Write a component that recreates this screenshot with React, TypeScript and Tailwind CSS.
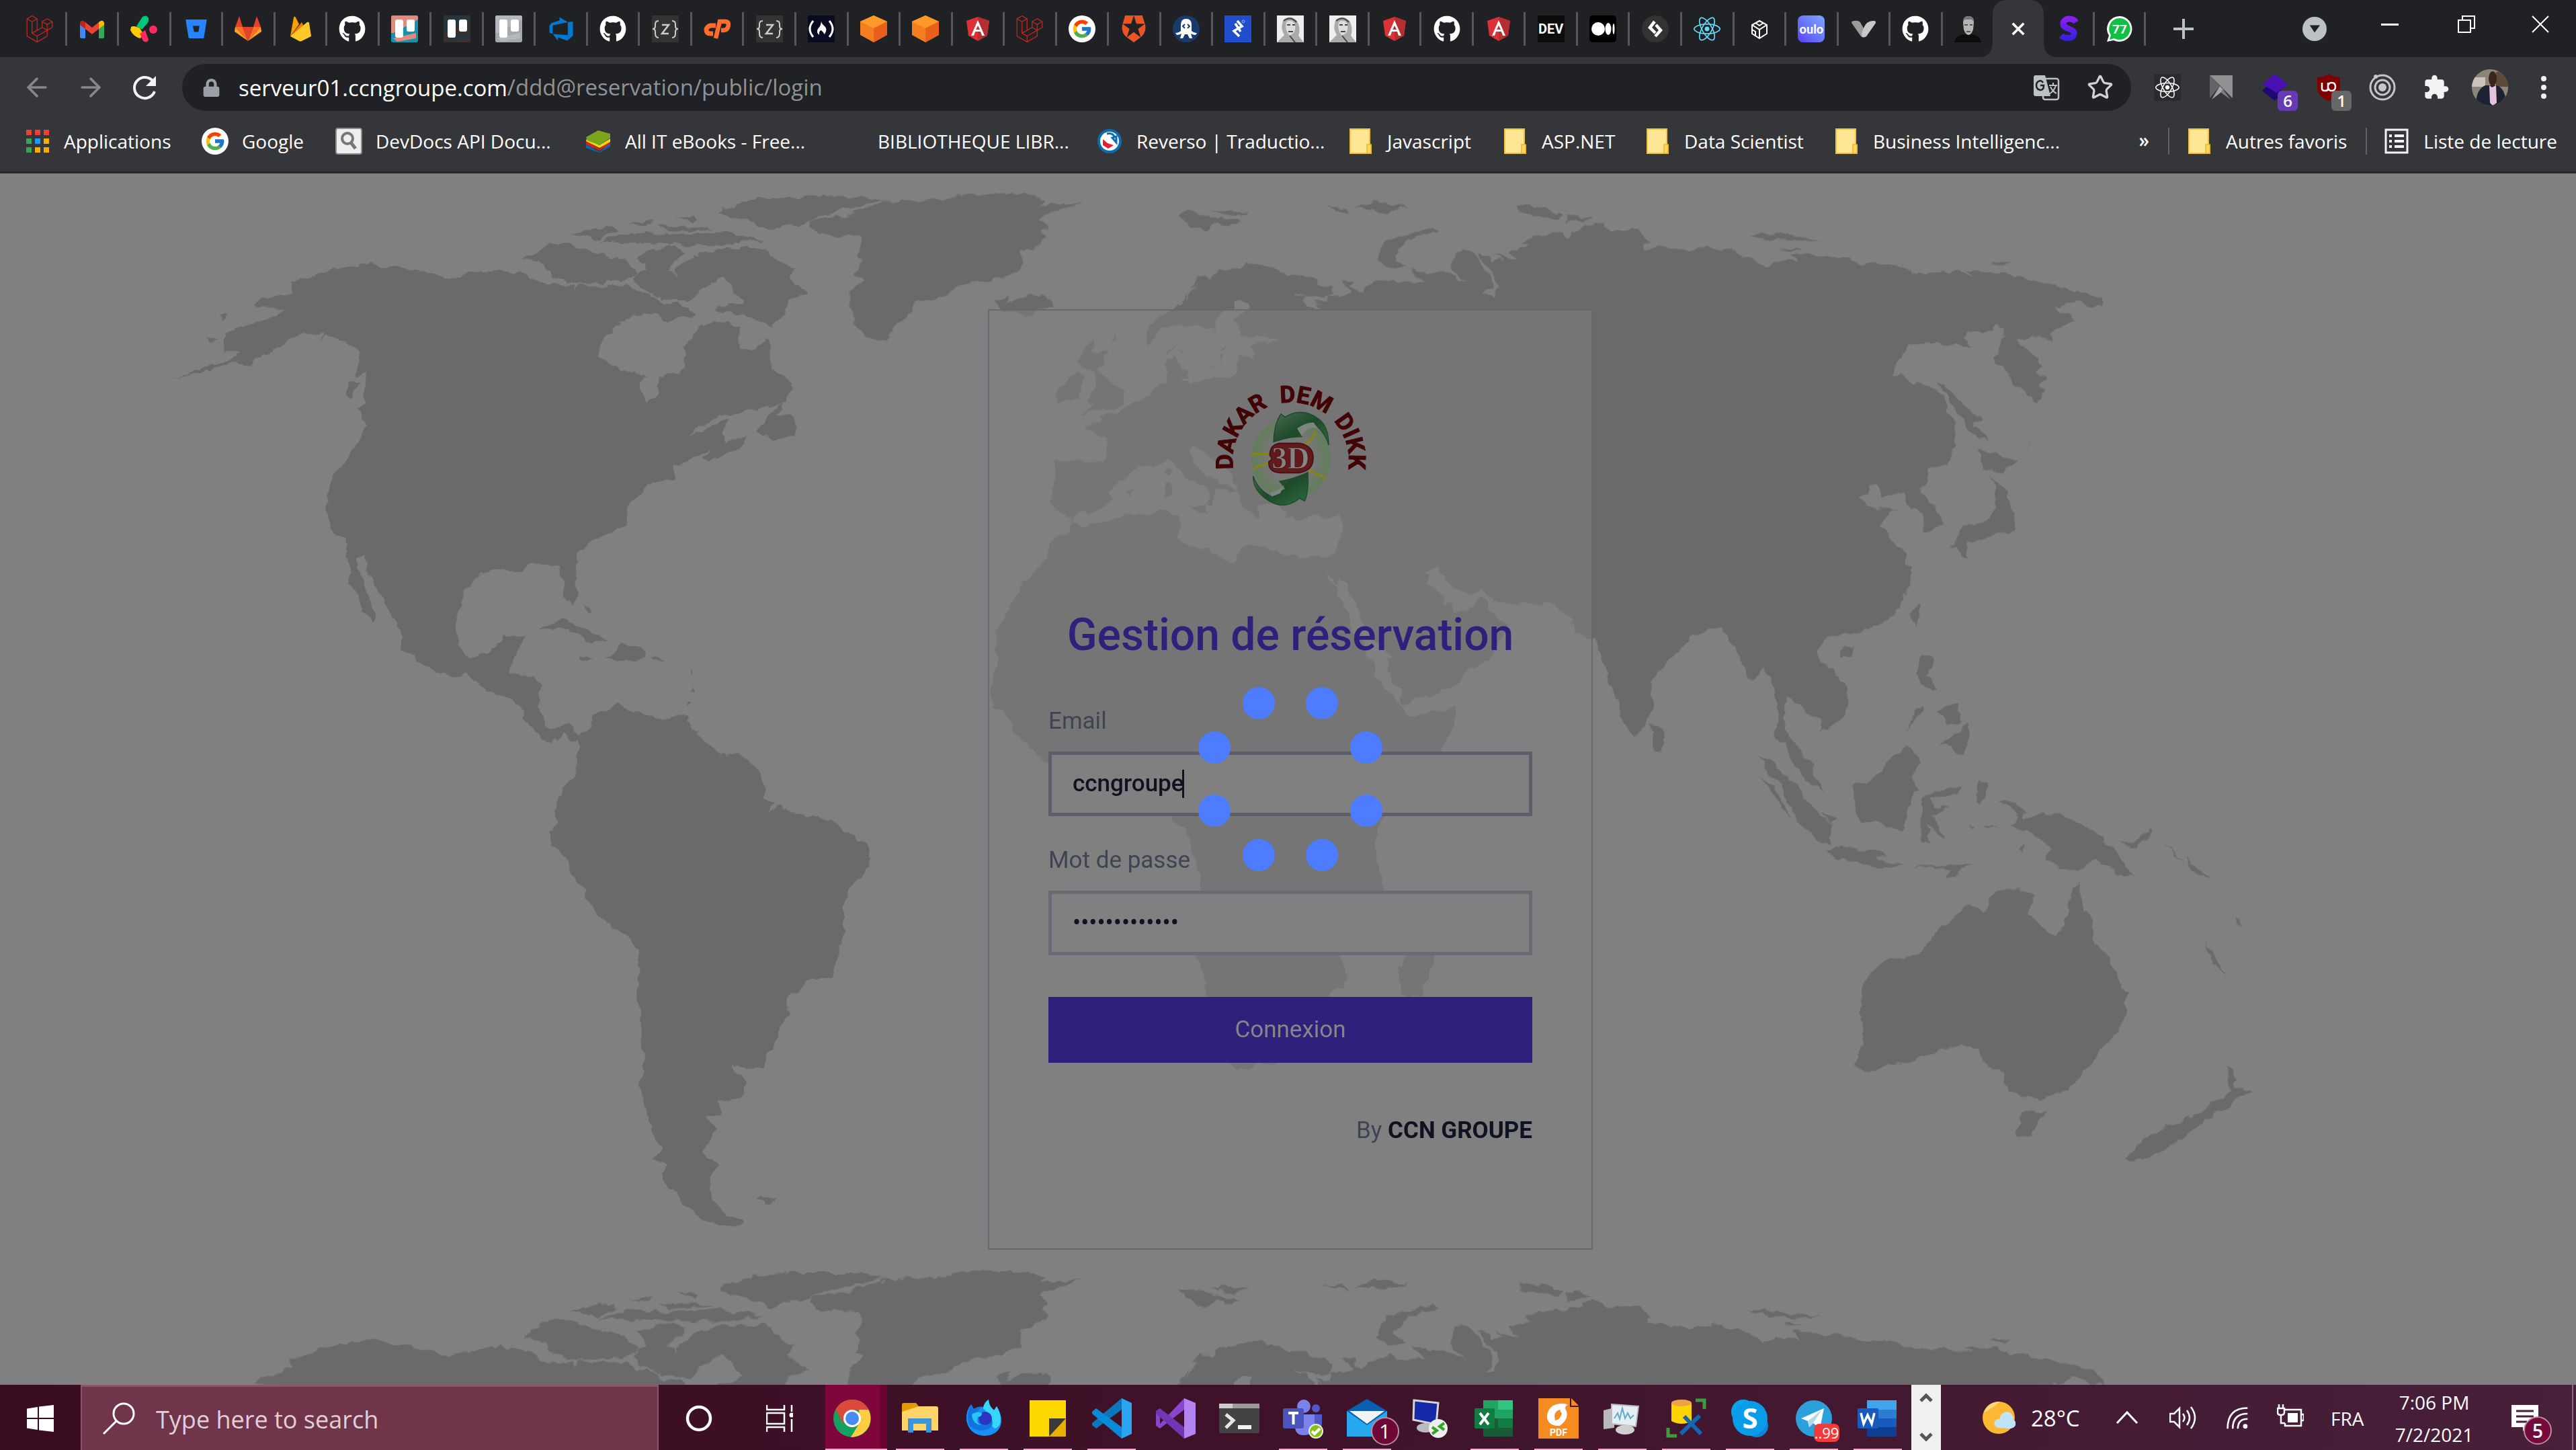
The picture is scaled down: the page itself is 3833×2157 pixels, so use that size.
import React from "react";
import { FaLaravel, FaGithub, FaReact, FaBitbucket, FaLock } from "react-icons/fa";
import { FcGoogle } from "react-icons/fc";
import { SiAuth0 } from "react-icons/si";
import { VscAzureDevops } from "react-icons/vsc";
import { ArrowLeft, ArrowRight, Star } from "lucide-react";

type SvgProps = { children: React.ReactNode; box?: string; className?: string };

function Svg({ children, box = "0 0 40 40", className = "size-10" }: SvgProps) {
  return (
    <svg viewBox={box} className={className} aria-hidden="true" fill="none">
      {children}
    </svg>
  );
}

/* ---------- tab favicons ---------- */

const Laravel = () => <FaLaravel className="size-10 text-[#c3271f]" />;
const Github = () => <FaGithub className="size-10 text-white" />;
const Angular = () => (
  <Svg>
    <path d="M20 2 37 8l-3 22-14 8L6 30 3 8z" fill="#dd3136" />
    <path d="M20 2 37 8l-3 22-14 8z" fill="#b52e31" />
    <path d="m20 7 10 23h-4l-2-6h-8l-2 6h-4zm0 8-3 6h6z" fill="#fff" />
  </Svg>
);
const Gmail = () => (
  <Svg>
    <path d="M2 12v20q0 2 2 2h6V18z" fill="#4285f4" />
    <path d="M38 12v20q0 2-2 2h-6V18z" fill="#34a853" />
    <path d="M30 10v10l8-6v-3q-2-6-8-1z" fill="#fbbc04" />
    <path d="M2 11q2-6 8-1v10l-8-6z" fill="#c5221f" />
    <path d="m10 10 10 8 10-8v10l-10 8-10-8z" fill="#ea4335" />
  </Svg>
);
const ClickShape = () => (
  <Svg>
    <path d="m9 16 9-14q6-4 9 2 1 4-2 8l-8 9z" fill="#00c875" />
    <path d="M1 17q4-3 13 2l5 8-4 7q-10-2-15-12z" fill="#ffcc00" />
    <path d="m14 27 5 11q6 4 8-2l-5-14z" fill="#ff2b62" />
    <circle cx="34" cy="21" r="6" fill="#ff2b62" />
  </Svg>
);
const Gitlab = () => (
  <Svg>
    <path d="m20 38 8-21H12z" fill="#e24329" />
    <path d="m20 38-8-21H1z" fill="#fc6d26" />
    <path d="m20 38 8-21h11z" fill="#fc6d26" />
    <path d="M1 17 0 24l20 14zM39 17l1 7-20 14z" fill="#fca326" />
    <path d="M1 17h11L7 1zM39 17H28l5-16z" fill="#e24329" />
  </Svg>
);
const Firebase = () => (
  <Svg>
    <path d="M5 31 10 3q1-3 3 0l5 10z" fill="#ffa000" />
    <path d="m5 31 17-21 5 10z" fill="#f57c00" />
    <path d="m5 31 25-21q2-1 3 1l3 20-14 7q-2 1-4 0z" fill="#ffca28" />
  </Svg>
);
function TrelloTile({ bg, strip }: { bg: string; strip: string }) {
  return (
    <Svg>
      <rect width="40" height="40" rx="3" fill={bg} />
      <path d="M0 3q0-3 3-3h34q3 0 3 3v3L4 26H0zM3 34l34-8v8l-28 5z" fill={strip} />
      <rect x="6" y="6" width="12" height="27" rx="3" fill="#fff" />
      <rect x="23" y="6" width="12" height="18" rx="3" fill="#fff" />
    </Svg>
  );
}
const Braces = () => (
  <Svg>
    <rect width="40" height="40" fill="#333" />
    <path d="M10 8q-5 0-5 5v3q0 4-4 4 4 0 4 4v3q0 6 5 6M30 8q5 0 5 5v3q0 4 4 4-4 0-4 4v3q0 6-5 6" stroke="#ccc" strokeWidth="2" />
    <path d="M15 14h10L15 27h10" stroke="#ccc" strokeWidth="2.5" />
  </Svg>
);
const CPanel = () => (
  <Svg>
    <path d="M18 15h-7q-6 1-7 6 0 6 6 6h4" stroke="#ff6c2c" strokeWidth="7" />
    <path d="M18 34 24 9h8q5 0 5 5-1 8-7 8h-4" stroke="#ff6c2c" strokeWidth="6.5" />
  </Svg>
);
const Camp = () => (
  <Svg>
    <rect width="40" height="40" fill="#0a0a23" />
    <path d="M8 8q-10 12 0 24M32 8q10 12 0 24" stroke="#fff" strokeWidth="3" />
    <path d="M20 8q0 7-5 12-3 5 2 9-1-6 3-7 3 3 5 6 5-8 0-12-5-4-5-8z" fill="#fff" />
  </Svg>
);
const Cube = () => (
  <Svg>
    <path d="m20 0 20 9v20L20 40 0 29V9z" fill="#f47e20" />
    <path d="m20 0 20 9-20 10L0 9z" fill="#ff9a2a" />
    <path d="M40 9v20L20 40V19z" fill="#e8601c" />
  </Svg>
);
const GoogleDot = () => (
  <span className="flex size-10 items-center justify-center rounded-full bg-white">
    <FcGoogle className="size-8" />
  </span>
);
const Octopus = () => (
  <Svg>
    <circle cx="20" cy="20" r="20" fill="#173b6b" />
    <path d="M12 14q0-9 8-9t8 9v9q3 3 8 3l-2 3q-4 0-7-2l2 7h-4l-3-6-4 0-3 6h-4l2-7q-3 2-7 2l-2-3q5 0 8-3z" fill="#fff" />
    <path d="m18 13-3 3 3 3m4-6 3 3-3 3" stroke="#173b6b" strokeWidth="2" />
  </Svg>
);
const Toptal = () => (
  <Svg>
    <rect width="40" height="40" fill="#204ecf" />
    <path d="m19 8 7 8-12 7 8 8M16 12l8 12" stroke="#fff" strokeWidth="3.5" />
    <circle cx="28" cy="9" r="2" stroke="#9fb6ff" />
  </Svg>
);
const Sketch = () => (
  <Svg>
    <rect width="40" height="40" fill="#eee" />
    <path d="M10 6q10-8 20 2 6 12 2 22l8 10H0l11-11Q4 18 10 6z" fill="#aaa" />
    <path d="M14 10q6-5 12 1 3 9-1 15l-6 4q-8-8-5-20z" fill="#ddd" />
    <path d="M15 14h5m3 0h4M17 24h7M10 8q10-8 19 2M19 30l8 10" stroke="#444" strokeWidth="2" />
  </Svg>
);
const Dev = () => (
  <span className="flex size-10 items-center justify-center bg-[#0c0c0c] font-['Roboto',sans-serif] text-[20px] leading-none font-bold text-white">
    DEV
  </span>
);
const Medium = () => (
  <Svg>
    <rect width="40" height="40" rx="5" fill="#000" />
    <circle cx="13" cy="20" r="10" fill="#fff" />
    <ellipse cx="28" cy="20" rx="4.5" ry="9" fill="#fff" />
    <ellipse cx="36" cy="20" rx="1.500" ry="8" fill="#fff" />
  </Svg>
);
const Bolt = () => (
  <Svg>
    <circle cx="20" cy="20" r="20" fill="#333" />
    <path d="m19 9-7 9 8 8M21 14l7 8-8 9" stroke="#fff" strokeWidth="4.5" />
  </Svg>
);
const ReactTab = () => <FaReact className="size-10 text-[#61dafb]" />;
const Sandbox = () => (
  <Svg>
    <path d="m20 8 11 6v13l-11 7-11-7V14zM9 14l11 7 11-7M20 21v13M14 11l6 4 6-4M9 21l5 3v6" stroke="#fff" strokeWidth="2" />
  </Svg>
);
const Oulo = () => (
  <span className="flex size-10 items-center justify-center rounded-lg bg-linear-to-tr from-[#5b3df5] to-[#7fa6ff] font-['Lato',sans-serif] text-[18px] leading-none font-black text-white">
    oulo
  </span>
);
const Vee = () => (
  <Svg>
    <path d="M2 11q0-3 4-3 8-1 10 4l4 7q4-11 15-11 3 0 3 3L24 31q-4 3-8 0z" fill="#9b9b9b" />
    <path d="M20 19q4-11 15-11 3 0 3 3L24 31q-3 2-6 1-2-6 2-13z" fill="#c8c8c8" />
  </Svg>
);
const Portrait = () => (
  <Svg>
    <path d="M0 40q2-10 12-12h16q10 2 12 12z" fill="#0c0c0c" />
    <path d="M13 10q0-9 8-9t8 9l-1 11q-3 8-7 8t-7-8z" fill="#b5b5b5" />
    <path d="M13 9Q13 1 21 1t8 8l-3-3H16z" fill="#777" />
    <path d="M15 14h5m3 0h4M18 24h6" stroke="#555" strokeWidth="2" />
  </Svg>
);
const PurpleS = () => (
  <Svg>
    <defs>
      <linearGradient id="ps" x2="0" y2="1">
        <stop stopColor="#8a1ff0" />
        <stop offset="1" stopColor="#3b1fe0" />
      </linearGradient>
    </defs>
    <path d="M31 10C27 3 13 3 12 12c-1 9 18 7 16 16-2 8-15 6-19 2" stroke="url(#ps)" strokeWidth="9" />
  </Svg>
);
const Whats = () => (
  <Svg>
    <path d="M20 1a19 19 0 1 1-9 36L1 39l3-9A19 19 0 0 1 20 1z" fill="#fff" />
    <path d="M20 4a16 16 0 1 1-8 30l-7 2 2-7A16 16 0 0 1 20 4z" fill="#0fc143" />
    <text x="20" y="27" textAnchor="middle" fontFamily="Roboto" fontWeight="700" fontSize="19" fill="#fff">77</text>
  </Svg>
);

const TABS: [string, React.ReactNode][] = [
  ["Laravel", <Laravel />], ["Gmail", <Gmail />], ["ClickUp", <ClickShape />],
  ["Bitbucket", <FaBitbucket className="size-8 text-[#2684ff]" />],
  ["GitLab", <Gitlab />], ["Firebase", <Firebase />], ["GitHub", <Github />],
  ["Trello", <TrelloTile bg="#1593ac" strip="#e08a80" />],
  ["Trello", <TrelloTile bg="#3a302d" strip="#25363c" />],
  ["Trello", <TrelloTile bg="#a4a8ad" strip="#b4b8bd" />],
  ["Azure DevOps", <VscAzureDevops className="size-10 text-[#0078d4]" />],
  ["GitHub", <Github />], ["Zeit", <Braces />],
  ["cPanel", <CPanel />],
  ["Zeit", <Braces />], ["freeCodeCamp", <Camp />], ["Cube", <Cube />], ["Cube", <Cube />],
  ["Angular", <Angular />], ["Laravel", <Laravel />], ["Google", <GoogleDot />],
  ["Auth0", <SiAuth0 className="size-10 text-[#eb5424]" />],
  ["Octopus", <Octopus />], ["Toptal", <Toptal />], ["Blog", <Sketch />], ["Blog", <Sketch />],
  ["Angular", <Angular />], ["GitHub", <Github />], ["Angular", <Angular />], ["DEV", <Dev />],
  ["Medium", <Medium />], ["StackBlitz", <Bolt />], ["React", <ReactTab />], ["CodeSandbox", <Sandbox />],
  ["Oulo", <Oulo />], ["Vectary", <Vee />], ["GitHub", <Github />], ["Portrait", <Portrait />],
];

function TabStrip() {
  return (
    <div className="flex h-[85px] items-center bg-[#202124] pl-[22px]">
      <div className="flex w-[2943px] min-w-0 items-center">
        {TABS.map(([name, icon], i) => (
          <button
            key={i}
            aria-label={name}
            className={"flex h-[50px] min-w-0 flex-1 items-center justify-center " + (i < 37 ? "border-r-[3px] border-[#55575b]" : "")}
          >
            {icon}
          </button>
        ))}
      </div>
      <button aria-label="Fermer l'onglet" className="relative flex h-full w-[76px] items-center justify-center rounded-t-[20px] bg-[#35363a]">
        <svg viewBox="0 0 116 20" className="absolute bottom-0 -left-5 h-5 w-[116px]" aria-hidden="true">
          <path d="M0 20Q18 20 20 0v20zM96 0q2 20 20 20H96z" fill="#35363a" />
        </svg>
        <Svg className="size-[22px]" box="0 0 24 24">
          <path d="m3 3 18 18M21 3 3 21" stroke="#fff" strokeWidth="4" />
        </Svg>
      </button>
      <button aria-label="Studio" className="flex h-[50px] w-[76px] items-center justify-center border-r-[3px] border-[#55575b]"><PurpleS /></button>
      <button aria-label="WhatsApp" className="flex h-[50px] w-[76px] items-center justify-center border-r-[3px] border-[#55575b]"><Whats /></button>
      <button aria-label="Nouvel onglet" className="ml-9 flex size-10 items-center justify-center">
        <Svg className="size-8" box="0 0 32 32"><path d="M16 1v30M1 16h30" stroke="#bdc1c6" strokeWidth="4" /></Svg>
      </button>
      <div className="ml-auto flex h-full items-center">
        <button aria-label="Rechercher un onglet" className="mr-[37px]">
          <Svg className="size-9"><circle cx="20" cy="20" r="20" fill="#bdc1c6" /><path d="M12 14h17l-9 12z" fill="#202124" /></Svg>
        </button>
        <button aria-label="Réduire" className="flex h-[72px] w-[114px] items-center justify-center self-start">
          <span className="h-[3px] w-[26px] bg-white" />
        </button>
        <button aria-label="Restaurer" className="flex h-[72px] w-[114px] items-center justify-center self-start">
          <Svg className="size-[26px]" box="0 0 26 26"><path d="M1 7h18v18H1zM7 7V1h18v18h-6" stroke="#fff" strokeWidth="2" /></Svg>
        </button>
        <button aria-label="Fermer" className="flex h-[72px] w-[106px] items-center justify-center self-start">
          <Svg className="size-[26px]" box="0 0 26 26"><path d="m1 1 24 24M25 1 1 25" stroke="#fff" strokeWidth="2" /></Svg>
        </button>
      </div>
    </div>
  );
}

/* ---------- toolbar ---------- */

function Ext({ label, children, badge, badgeClass }: { label: string; children: React.ReactNode; badge?: string; badgeClass?: string }) {
  return (
    <button aria-label={label} className="relative flex h-[70px] w-20 items-center justify-center">
      {children}
      {badge && (
        <span className={"absolute right-[6px] bottom-0 flex h-[30px] w-[30px] items-center justify-center rounded-md text-[24px] leading-none font-semibold text-white " + badgeClass}>
          {badge}
        </span>
      )}
    </button>
  );
}

function Toolbar() {
  return (
    <div className="flex h-[90px] items-center bg-[#35363a] pl-[15px]">
      <button aria-label="Précédent" className="flex w-20 justify-center"><ArrowLeft className="size-11 text-[#85878a]" strokeWidth={2} /></button>
      <button aria-label="Suivant" className="flex w-20 justify-center"><ArrowRight className="size-11 text-[#85878a]" strokeWidth={2} /></button>
      <button aria-label="Actualiser" className="flex w-20 justify-center">
        <Svg className="size-10"><path d="M34 13A15.500 15.500 0 1 0 35 26" stroke="#f1f3f4" strokeWidth="4" /><path d="M37 3v15H22z" fill="#f1f3f4" /></Svg>
      </button>
      <div className="ml-4 flex h-[70px] min-w-0 flex-1 items-center rounded-full bg-[#202124] pr-[26px] pl-[30px]">
        <FaLock className="size-[27px] shrink-0 text-[#9aa0a6]" />
        <div className="ml-[27px] flex min-w-0 flex-1 items-center text-[33px] leading-[50px]">
          <input aria-label="Adresse" defaultValue="serveur01.ccngroupe.com" className="field-sizing-content h-[60px] bg-transparent text-white outline-none" />
          <span className="text-[#8f9296]">/ddd@reservation/public/login</span>
        </div>
        <button aria-label="Traduire" className="mr-10">
          <Svg>
            <rect x="15" y="7" width="23" height="31" rx="3" stroke="#bdc1c6" strokeWidth="2.500" />
            <path d="M4 2h14l8 31H4q-3 0-3-3V5q0-3 3-3z" fill="#bdc1c6" />
            <path d="M15 13q-2-3-4-3-6 1-6 7t6 7q5 0 5-7h-5" stroke="#202124" strokeWidth="2.500" />
            <path d="M24 17h12M30 13v4M34 17q-2 8-10 13M26 19q3 7 9 10" stroke="#bdc1c6" strokeWidth="2" />
          </Svg>
        </button>
        <button aria-label="Favori"><Star className="size-10 text-[#d0d3d6]" strokeWidth={2} /></button>
      </div>
      <div className="ml-[14px] flex items-center">
        <Ext label="React DevTools"><span className="flex size-10 items-center justify-center bg-[#2a2b2f]"><FaReact className="size-9 text-white" /></span></Ext>
        <Ext label="Extension">
          <Svg><path d="M3 2v34l15-18z" fill="#646567" /><path d="M3 2 37 36V2z" fill="#909193" /><path d="m18 18 6 6-18 14z" fill="#a5a6a8" /><path d="m22 22 12 16-14-10z" fill="#7b7c7e" /></Svg>
        </Ext>
        <Ext label="Extension" badge="6" badgeClass="bg-[#673ab7]">
          <Svg><path d="M1 25 18 8l14 20-12 12z" fill="#1c0a70" /><path d="M20 0 40 16 22 28 1 15z" fill="#4a0fb0" /></Svg>
        </Ext>
        <Ext label="uBlock Origin" badge="1" badgeClass="bg-[#666]">
          <Svg><path d="M20 0q8 5 17 5v15q0 13-17 20Q3 33 3 20V5q9 0 17-5z" fill="#800000" /><path d="M10 13v9q0 3 5 3 4 0 4-3v-9m0 6q0-6 5.500-6t5.500 6-5.500 6-5.500-6" stroke="#fff" strokeWidth="2.500" /></Svg>
        </Ext>
        <Ext label="Extension">
          <Svg><circle cx="20" cy="20" r="18" stroke="#c4c6c8" strokeWidth="3" /><circle cx="20" cy="20" r="11" stroke="#c4c6c8" strokeWidth="3" /><circle cx="20" cy="20" r="6" fill="#c4c6c8" /><circle cx="10" cy="4" r="3" fill="#c4c6c8" /></Svg>
        </Ext>
        <Ext label="Extensions">
          <Svg box="0 0 24 24"><path d="M20.500 11H19V7c0-1.100-.9-2-2-2h-4V3.500C13 2.120 11.880 1 10.500 1S8 2.120 8 3.500V5H4c-1.100 0-2 .9-2 2v3.800h1.500c1.490 0 2.700 1.210 2.700 2.700s-1.210 2.700-2.700 2.700H2V20c0 1.100.9 2 2 2h3.800v-1.500c0-1.490 1.210-2.700 2.700-2.700s2.700 1.210 2.700 2.700V22H17c1.100 0 2-.9 2-2v-4h1.500c1.380 0 2.500-1.120 2.500-2.500S21.880 11 20.500 11z" fill="#f1f3f4" /></Svg>
        </Ext>
        <Ext label="Profil">
          <Svg className="size-[54px] rounded-full" box="0 0 54 54">
            <rect width="54" height="54" fill="#8d8579" />
            <path d="M0 12h20v14H0z" fill="#c9c3bb" /><path d="M36 4h18v22H36z" fill="#5d4a38" /><path d="M6 54q0-24 14-30h17q14 5 14 30z" fill="#1c2233" />
            <path d="m26 24 4 3 6-3 1 26-6 4-4-4z" fill="#e6c3dd" /><ellipse cx="31" cy="14" rx="6" ry="11" fill="#3a241c" />
          </Svg>
        </Ext>
        <Ext label="Menu"><Svg><circle cx="20" cy="7" r="4" fill="#f1f3f4" /><circle cx="20" cy="20" r="4" fill="#f1f3f4" /><circle cx="20" cy="33" r="4" fill="#f1f3f4" /></Svg></Ext>
        <span className="w-2" />
      </div>
    </div>
  );
}

/* ---------- bookmarks ---------- */

const Folder = () => (
  <Svg>
    <path d="M5 2h29v24h2v12H5z" fill="#ffe694" stroke="#f2c43d" strokeWidth="2" />
    <path d="M30 38V25h6v13z" fill="#ffd75e" stroke="#e8b730" strokeWidth="1.500" />
  </Svg>
);
const AppsGrid = () => (
  <Svg>
    {["#ea4335", "#ea4335", "#ea4335", "#34a853", "#1a9bff", "#f9ab00", "#34a853", "#f9ab00", "#f9ab00"].map((c, i) => (
      <rect key={i} x={4 + (i % 3) * 13} y={3 + Math.floor(i / 3) * 13} width="8" height="8" fill={c} />
    ))}
  </Svg>
);
const DocsIcon = () => (
  <Svg>
    <rect x="1" y="1" width="38" height="38" rx="3" fill="#eee" stroke="#8d8d8d" strokeWidth="2" />
    <circle cx="18" cy="16" r="8" stroke="#777" strokeWidth="4" /><path d="m23 22 7 9" stroke="#777" strokeWidth="5" />
  </Svg>
);
const BooksIcon = () => (
  <Svg>
    <path d="M2 25 22 36l16-14v6L22 37 2 30z" fill="#0a68b5" /><path d="M2 20 22 31l16-13v6L22 34 2 25z" fill="#d6231c" />
    <path d="M3 16 22 26l16-10v5L22 30 2 20z" fill="#f5d615" /><path d="M2 14 20 4l18 5v6L22 26 4 19z" fill="#7ba51c" />
  </Svg>
);
const ReversoIcon = () => (
  <Svg>
    <circle cx="20" cy="20" r="18" fill="#0d6cad" /><circle cx="20" cy="20" r="14" fill="#fff" />
    <path d="M16 9q9-2 12 6M30 22l-6-7 6-2z" stroke="#0d6cad" strokeWidth="3" /><path d="M10 17v9l8 5 8-5-9-3z" fill="#e3202c" />
  </Svg>
);

const BOOKMARKS: [string, React.ReactNode, string][] = [
  ["Applications", <AppsGrid />, "w-[265px]"],
  ["Google", <GoogleDot />, "w-[199px]"],
  ["DevDocs API Docu...", <DocsIcon />, "w-[371px]"],
  ["All IT eBooks - Free...", <BooksIcon />, "w-[376px]"],
  ["BIBLIOTHEQUE LIBR...", <span className="size-10" />, "w-[385px]"],
  ["Reverso | Traductio...", <ReversoIcon />, "w-[373px]"],
  ["Javascript", <Folder />, "w-[230px]"],
  ["ASP.NET", <Folder />, "w-[212px]"],
  ["Data Scientist", <Folder />, "w-[281px]"],
  ["Business Intelligenc...", <Folder />, "w-[360px]"],
];

function Bookmarks() {
  return (
    <nav className="flex h-[83px] items-start border-b-[3px] border-[#29292b] bg-[#35363a] pt-[10px] pr-[28px] pl-[35px] text-[28px] leading-[50px] whitespace-nowrap text-white">
      {BOOKMARKS.map(([name, icon, width]) => (
        <a key={name} href="#" className={"flex items-center gap-5 " + width}>
          <span className="flex shrink-0">{icon}</span>
          {name}
        </a>
      ))}
      <button aria-label="Autres" className="mr-7 ml-auto leading-[46px] font-semibold">»</button>
      <span className="mt-[5px] h-10 w-[2px] bg-[#5f6368]" />
      <a href="#" className="ml-6 flex items-center gap-5"><Folder />Autres favoris</a>
      <span className="mt-[5px] ml-7 h-10 w-[2px] bg-[#5f6368]" />
      <a href="#" className="ml-6 flex items-center gap-5">
        <Svg><path d="M4 3h32v34H4z" stroke="#f1f3f4" strokeWidth="3" /><path d="M9 12h4m4 0h14M9 20h4m4 0h14M9 28h4m4 0h14" stroke="#f1f3f4" strokeWidth="4" /></Svg>
        Liste de lecture
      </a>
    </nav>
  );
}

/* ---------- world map backdrop ---------- */

function Land() {
  return (
    <g fill="#6b6b6b">
      <g transform="translate(200 250) scale(.829 1.1543)">
        <path d="M63 273 110 262 160 250 190 240 160 235 165 210 200 205 230 195 270 183 215 178 225 170 285 160 280 148 330 135 370 128 420 122 450 127 500 130 555 142 600 135 650 133 660 128 672 136 690 133 740 150 790 150 794 157 800 150 830 153 880 150 900 158 935 165 960 180 950 188 900 190 870 200 835 225 838 245 880 262 918 268 908 285 920 302 940 290 942 270 975 262 995 243 985 230 1020 200 1060 198 1085 205 1085 232 1110 235 1140 218 1145 260 1172 270 1182 285 1165 303 1100 313 1050 318 985 348 1040 330 1068 324 1053 345 1062 355 1100 345 1090 360 1030 378 1022 372 1035 362 1000 375 970 385 968 400 920 408 885 435 880 458 850 470 800 492 792 505 796 550 785 563 770 550 765 515 740 510 715 510 690 520 640 517 595 540 590 565 575 585 580 615 600 632 640 627 660 603 700 600 690 620 670 650 720 657 733 665 725 690 735 720 755 722 775 716 805 730 790 740 770 728 760 740 735 735 710 718 695 710 700 700 680 685 630 672 595 652 570 657 520 640 475 618 480 600 460 575 440 550 418 520 415 500 402 500 405 520 420 550 433 580 428 585 405 570 405 550 382 535 388 520 380 480 350 468 345 425 350 405 365 388 400 360 415 330 400 310 412 305 415 262 400 270 402 235 385 225 345 215 330 225 342 213 300 213 250 235 200 255 180 250 130 262z" />
        <path d="M795 735 820 720 825 705 870 692 890 700 940 710 990 705 1000 725 1030 742 1050 755 1090 755 1118 775 1132 800 1130 812 1148 818 1138 833 1160 820 1200 835 1250 840 1295 865 1312 868 1320 890 1310 910 1290 925 1272 950 1273 990 1265 1015 1250 1042 1210 1045 1172 1068 1172 1092 1150 1125 1125 1162 1075 1158 1102 1180 1090 1198 1045 1205 1052 1222 1020 1222 1045 1240 1030 1258 1020 1272 1048 1285 1035 1300 1030 1320 1060 1348 1095 1357 1080 1367 1020 1355 985 1335 945 1297 960 1285 935 1280 942 1262 922 1220 907 1188 915 1160 905 1100 902 1010 890 993 830 965 800 925 770 885 750 875 745 857 760 845 750 830 770 800 793 785 795 760z" />
        <path d="M695 118 745 97 780 97 810 105 850 112 880 118 905 135 880 144 850 148 800 149 750 142 735 125zM895 140 925 128 965 132 990 150 1020 155 1000 170 950 168 910 156zM970 132 1000 115 1050 103 1130 103 1145 115 1185 130 1172 142 1212 160 1175 170 1160 190 1145 207 1120 195 1080 190 1040 182 1090 172 1075 155 1055 140 1020 155 985 150zM1115 340 1160 303 1155 318 1185 320 1187 345 1145 347zM930 182 975 172 1005 190 960 197zM780 85 860 74 868 82 835 92zM885 72 930 65 925 73zM835 95 900 82 960 86 1050 83 1130 92 1050 99 940 98zM900 112 960 100 990 108 950 135 920 130zM970 62 1010 64 1005 71zM940 75 1010 76 1040 80 960 82zM1050 60 1055 50 1115 40 1200 36 1300 36 1345 42 1290 52 1230 62 1190 72 1140 80 1100 68zM725 595 770 580 800 590 850 612 815 612 780 593zM845 630 875 612 915 622 918 630 880 637zM797 630 822 632 815 637zM930 629 952 632 935 636zM808 563 820 570 817 577zM1118 1328 1155 1326 1135 1336zM380 290 385 275 405 277 388 295zM130 220 150 219 140 225zM152 192 170 191 160 196zM997 645 1003 650 1000 655zM1000 668 1005 672 999 676zM990 690 996 693 990 697z" />
      </g>
      <g transform="translate(1150 256) scale(.829 .3333)">
        <path d="M70 210 100 200 140 195 150 170 190 150 200 130 250 128 300 125 360 100 420 95 470 110 490 130 480 145 555 138 520 165 490 190 480 210 495 250 480 270 495 300 465 345 445 360 445 430 410 470 345 500 310 555 260 580 245 620 220 690 205 745 194 755 170 740 150 690 135 600 137 530 165 480 145 460 160 400 150 370 160 310 155 280 85 278 68 240z" />
        <path d="M672 690 700 640 727 605 745 560 755 520 763 500 750 510 765 470 785 480 800 440 830 430 850 412 880 412 900 430 930 460 960 465 980 490 1005 510 1005 540 990 560 965 555 935 540 955 570 960 605 975 625 1000 605 970 575 1000 580 1015 545 1030 555 1040 535 1020 485 1045 490 1040 515 1060 535 1065 510 1085 490 1115 475 1120 495 1170 490 1145 430 1180 450 1210 455 1245 490 1225 455 1215 420 1225 380 1225 345 1245 345 1265 380 1275 430 1290 470 1295 515 1275 550 1295 552 1303 510 1300 480 1285 430 1265 365 1285 365 1290 400 1310 390 1295 365 1340 395 1320 350 1360 325 1345 310 1380 280 1410 270 1425 285 1430 265 1450 265 1455 235 1490 235 1500 265 1550 262 1568 290V690H825L835 650 860 590 850 575 835 580 830 620 800 660 798 690z" />
        <path d="M1080 390 1100 300 1150 270 1180 248 1197 268 1140 300 1115 380 1135 430 1105 425zM725 180 760 185 800 205 838 225 820 250 800 225 775 268 740 220zM785 170 855 175 830 198zM985 160 1025 155 1035 180zM1045 165 1080 132 1140 155 1100 182zM1340 150 1360 145 1420 190 1415 212 1340 185zM1428 190 1468 210 1428 230zM400 570 425 548 420 585 445 560 480 548 500 565 500 595 450 645 410 615z" />
      </g>
      <g transform="translate(1450 440) scale(.5995 .408)">
        <path d="M535 -20 510 50 470 75 430 105 432 180 445 205 465 215 490 200 505 180 515 200 535 250 560 265 590 258 605 245 608 205 622 190 628 170 620 140 600 130 598 90 615 60 645 50 645 30 665 15 690 0 820 0 820 30 860 55 850 30 885 40 880 0H1568V1230L1515 1250 1475 1190 1500 1190 1460 1160 1430 1120 1350 1125 1290 1115 1260 1070 1230 1090 1190 1060 1155 1010 1150 985 1135 985 1120 1000 1130 1050 1165 1100 1165 1130 1185 1120 1185 1150 1225 1150 1260 1100 1280 1150 1325 1200 1300 1260 1280 1320 1210 1380 1205 1410 1150 1450 1070 1485 1055 1480 1045 1350 1010 1270 975 1220 945 1120 905 1020 895 1050 870 1000 920 1140 940 1230 990 1340 995 1400 1060 1490 1080 1535 1135 1520 1195 1495 1190 1568H100L45 1480 40 1420 60 1310 50 1230 85 1150 120 1045 175 960 190 900 235 850 245 820 230 790H200L192 740 205 660 200 620 205 602H318L325 570V530L300 495 280 490 275 468 310 460 310 440 345 430 380 405 415 375 440 340 475 320 480 285 470 260 475 230 500 215 515 260 515 310 550 320 600 300 635 305 650 280 652 250 655 205 685 237 695 220 690 180 755 165 745 150 690 160 655 150 650 110 645 75 685 40 665 15 645 30 645 50 615 60 598 90V130L620 140 628 170 608 205 605 245 560 265 535 250 505 180 465 215 445 205 432 180z" />
        <path d="M205 345 240 285 270 290 272 330 260 370 205 390zM255 245 270 200 300 165 302 185 290 200 330 205 320 255 300 265 345 320 375 360 370 400 320 420 265 430 300 400 275 385 290 350 300 320 300 280 265 270zM338 160 350 140 350 160z" />
        <path d="M245 820 270 790 300 790 330 755 350 740 335 715 360 670 400 640 410 620 450 625 475 595 495 605 500 625 530 660 560 690 575 700 585 730 575 765 590 760 605 705 655 715 620 690 600 670 560 640 530 570 545 550 570 575 600 605 630 640 645 680 650 710 665 755 690 800 705 810 700 770 740 755 760 765 775 795 800 815 830 800 865 815 912 800 910 850 895 940 880 955 835 945 810 960 775 950 745 925 690 905 660 925 655 965 645 975 590 940 585 920 540 905 500 880 515 835 505 790 470 785 430 795 385 795 350 805 310 830 265 840z" fill="#808080" />
        <path d="M535 765 575 768 580 800 560 795zM470 680 490 680 492 725 470 735zM480 620 490 640 485 665 475 650zM370 720 395 708 385 728z" />
        <path d="M515 260 550 262 590 255 605 245 608 205 622 190 628 170 620 140 600 130 598 90 615 60 645 50 645 30 665 15 685 20 685 40 645 75 650 110 655 150 745 150 755 165 690 180 695 220 685 237 655 205 652 250 650 280 635 305 600 300 550 320 520 310z" fill="#808080" />
        <path d="M508 270 530 270 528 305 512 300zM610 215 622 212 612 245zM568 285 575 295 565 295z" />
      </g>
      <g transform="translate(1450 980) scale(.5995 .574)">
        <path d="M60 0 40 70 45 120 75 140 100 190 130 225 185 270 230 290 300 265 400 240 430 270 440 330 480 400 530 460 555 540 560 600 550 740 550 770 570 820 575 860 610 960 630 1045 655 1065 700 1050 750 1048 830 960 880 870 920 850 920 800 905 760 930 700 1015 620 1015 575 1000 550 990 480 1010 420 1060 360 1150 260 1190 170 1195 125 1135 140 1080 155 1060 130 985 40 975 0zM1020 0 1065 115 1150 80 1210 40 1280 0zM1070 765 1110 700 1145 765 1110 870 1060 875 1050 800z" />
      </g>
      <g transform="translate(2340 250) scale(.7015 1.1543)">
        <path d="M0 85 45 72 80 80 140 80 165 95 115 108 175 102 250 106 290 102 350 108 405 125 430 118 480 120 465 110 580 116 620 124 690 124 725 135 820 134 850 140 830 132 900 134 960 142 1045 155 1090 160 1120 168 1125 180 1090 176 1060 172 1020 180 1070 195 1050 200 1020 210 1015 222 990 216 945 222 975 240 998 255 985 262 1002 270 990 278 1000 287 990 305 940 280 900 250 893 242 910 222 915 210 895 200 895 210 840 208 835 220 850 228 800 228 710 228 690 250 678 268 700 268 720 280 735 275 770 285 790 305 812 330 808 360 795 385 755 388 748 405 735 415 765 435 787 458 750 470 735 440 710 435 700 418 655 425 650 408 630 408 625 420 605 425 640 440 685 440 650 462 680 480 705 495 708 510 720 515 715 535 700 560 670 580 630 595 590 600 540 605 522 625 545 645 580 665 588 690 570 710 530 725 525 712 495 705 470 685 455 680 447 710 460 735 500 762 512 770 514 785 530 803 500 795 470 770 450 740 430 735 437 700 418 655 405 645 385 657 370 655 360 635 340 615 315 590 255 600 245 612 165 660 170 690 155 720 130 735 110 715 90 680 65 640 45 595 0 590z" />
        <path d="M165 715 185 725 197 742 190 753 172 753zM562 620 597 615 588 630 565 630zM715 575 730 560 738 563 730 592zM770 273 800 287 868 327 845 325 880 352 858 350 830 325zM860 360 910 372 945 378 915 392 870 388zM880 395 925 420 938 465 885 475 800 490 830 462 870 458 898 440 895 410zM802 485 835 482 838 503zM945 370 985 345 975 352zM735 627 767 630 758 655 770 670 745 670 730 652zM740 690 745 698 705 728zM775 700 820 690 825 715 795 718zM800 735 835 715 842 740 830 757 805 748 777 742zM390 760 430 768 480 800 520 830 548 845V872L520 867 470 835 440 795zM535 880 570 873 665 885 640 890 700 898 670 902 580 893zM715 900 770 900 850 898 795 915 800 905zM592 795 630 790 665 770 705 742 722 750 738 765 718 785 738 803 720 810 700 853 650 845 608 842zM745 810 780 800 825 797 815 808 760 810 765 825 800 823 765 835 795 865 770 855 755 845 757 868 742 867 737 840zM860 790 878 795 868 820 855 818zM905 815 940 818 958 828 955 840 1000 828 1050 836 1120 860 1150 880 1190 915 1150 908 1110 890 1075 907 1030 900 1003 893 1018 878 970 855 930 845 950 838zM1155 870 1190 870 1225 852 1190 838 1232 855 1195 877zM1250 865 1300 900 1275 885zM1300 887 1357 920 1315 908zM1340 995 1387 1042 1350 1018zM1404 962 1418 978 1408 975zM840 846 855 848 848 851zM870 845 905 848 880 850zM950 878 962 870 957 882zM530 830 560 838 545 843zM400 785 430 800 465 840 440 822z" />
        <path d="M625 1040 660 1022 715 1015 745 1008 765 990 800 970 840 950 870 962 890 935 935 927 983 935 965 962 1000 980 1020 992 1045 978 1055 940 1072 918 1082 957 1102 965 1105 1000 1138 1018 1165 1055 1180 1065 1165 1105 1120 1140 1050 1188 990 1203 920 1192 917 1165 885 1165 865 1137 830 1130 755 1140 715 1153 670 1155 630 1165 598 1157 620 1130 610 1075zM948 1218 1005 1215 975 1245 942 1247zM1173 1275 1230 1245 1330 1217 1395 1190 1388 1157 1408 1170 1408 1185 1435 1190 1400 1205 1340 1228 1260 1265 1205 1280zM370 87 405 84 470 88 530 93 440 94zM440 102 490 103 460 107zM888 122 930 122 910 126zM0 60 40 66 0 70z" />
      </g>
    </g>
  );
}

function WorldBackdrop() {
  return (
    <svg viewBox="0 258 3833 1802" preserveAspectRatio="xMidYMin slice" className="absolute inset-0 size-full" aria-hidden="true">
      <defs>
        <filter id="coast" filterUnits="userSpaceOnUse" x="0" y="258" width="3833" height="1802">
          <feTurbulence type="fractalNoise" baseFrequency=".05" numOctaves="3" seed="4" />
          <feDisplacementMap in="SourceGraphic" scale="14" xChannelSelector="R" yChannelSelector="G" />
        </filter>
      </defs>
      <g filter="url(#coast)">
        <Land />
        <g transform="translate(0 1602)"><Land /></g>
      </g>
    </svg>
  );
}

/* ---------- login card ---------- */

function Logo() {
  return (
    <svg viewBox="0 0 780 660" className="h-[220px] w-[260px]" role="img" aria-label="Dakar Dem Dikk">
      <defs>
        <path id="arc" d="M136 444A259 259 0 1 1 648 444" />
        <linearGradient id="leaf" x2="1" y2="1">
          <stop stopColor="#4c6b50" /><stop offset=".5" stopColor="#1d4a2a" /><stop offset="1" stopColor="#2f6b3d" />
        </linearGradient>
        <radialGradient id="globe"><stop offset=".6" stopColor="#777" /><stop offset="1" stopColor="#5f7f58" /></radialGradient>
      </defs>
      <g fill="#430406" stroke="#430406" strokeWidth="3" fontFamily="Roboto" fontWeight="700" fontSize="105">
        <text><textPath href="#arc" startOffset="0">DAKAR</textPath></text>
        <text><textPath href="#arc" startOffset="57%" textAnchor="middle">DEM</textPath></text>
        <text><textPath href="#arc" startOffset="100%" textAnchor="end">DIKK</textPath></text>
      </g>
      <ellipse cx="392" cy="397" rx="175" ry="178" fill="url(#globe)" />
      <path d="M217 376h80M224 446q30-22 74-28M455 333q40-25 48-58M470 448l77 34" stroke="#8c8410" strokeWidth="9" fill="none" />
      <path d="M315 322q2-80 33-125l18 14q75-45 145 5 50 30 50 120-18-60-70-100l-68 28 20 35q-65 0-128 23z" fill="url(#leaf)" stroke="#1c4a2a" strokeWidth="4" />
      <path d="M420 262q40-28 75-26l18 30q-20-15-38-2-30 12-32 35z" fill="#7d857e" />
      <path d="M468 458q5 90-14 128l-22-12q-70 55-140 10-70-45-68-110 20 60 78 90l68-32-28-34q70-12 126-40z" fill="url(#leaf)" stroke="#1c4a2a" strokeWidth="4" />
      <path d="M300 548q35-5 64-34l-20 38-38 14z" fill="#7d857e" />
      <path d="M340 328h90q62 10 62 66t-62 66h-88q-52-4-48-50 22-10 4-28 0-46 42-54z" fill="#641a1c" stroke="#421215" strokeWidth="5" />
      <text x="391" y="442" textAnchor="middle" fontFamily="Liberation Serif" fontWeight="700" fontSize="138" fill="#858585" stroke="#4c1214" strokeWidth="3">3D</text>
    </svg>
  );
}

function Spinner() {
  const dots = [[-47, -113], [47, -113], [-113, -47], [113, -47], [-113, 47], [113, 47], [-47, 113], [47, 113]];
  return (
    <div role="status" aria-label="Chargement" className="pointer-events-none absolute inset-0 flex items-center justify-center pl-[6px]">
      <svg viewBox="-140 -140 280 280" className="size-[280px]" aria-hidden="true">
        {dots.map(([x, y]) => <circle key={x + "," + y} cx={x} cy={y} r="24" fill="#4d7cff" />)}
      </svg>
    </div>
  );
}

function LoginPage() {
  return (
    <main className="relative flex flex-1 items-center justify-center overflow-hidden bg-[#808080] pl-[7px] font-['Roboto',sans-serif] text-[35px] leading-[54px]">
      <WorldBackdrop />
      <form onSubmit={(e) => e.preventDefault()} className="relative flex w-[900px] flex-col border-2 border-[#666973] bg-[#808080]/50 px-[88px] pt-[88px] pb-[148px] text-[#3d4453]">
        <div className="flex justify-center"><Logo /></div>
        <h1 className="mt-[130px] text-center text-[66px] leading-[90px] font-medium whitespace-nowrap text-[#2d217b]">Gestion de réservation</h1>
        <label htmlFor="email" className="mt-[56px]">Email</label>
        <div className="relative mt-[18px]">
          <input id="email" type="text" defaultValue="ccngroupe" className="h-[96px] w-full border-[5px] border-[#5a5f6b] bg-[#808080] px-[31px] font-medium text-[#0f1220] outline-none" />
          <span className="absolute top-[27px] left-[199px] h-[42px] w-[3px] bg-[#0f1220]" />
        </div>
        <label htmlFor="password" className="mt-[39px]">Mot de passe</label>
        <input id="password" type="password" defaultValue="1234567890123" className="mt-[18px] h-[96px] w-full border-[5px] border-[#686b74] bg-[#808080] px-[31px] text-[36px] text-[#0f1220] outline-none" />
        <button type="submit" className="mt-[62px] h-[98px] bg-[#2d217b] text-[#85868a]">Connexion</button>
        <p className="mt-[74px] text-right">By <a href="#" className="font-bold text-[#0f1220]">CCN GROUPE</a></p>
      </form>
      <Spinner />
    </main>
  );
}

/* ---------- taskbar ---------- */

const I60 = ({ children }: { children: React.ReactNode }) => <Svg box="0 0 60 60" className="size-[60px]">{children}</Svg>;

const TASKS: [string, boolean, React.ReactNode][] = [
  ["Explorateur", true, <I60><path d="M3 10q0-3 3-3h18l4 5v10H3z" fill="#e29a00" /><path d="M3 20 28 12h26q3 0 3 3v33H3z" fill="#ffd468" /><path d="M12 51V30h35v21h-8V38H20v13z" fill="#3a95dc" /></I60>],
  ["Firefox", true, <I60><path d="M4 33Q3 18 11 9l4 7q8-5 14-3 2-7 8-11 0 9 8 16l4-6q8 12 7 24-3 19-26 20Q8 54 4 33z" fill="#1690f5" /><path d="M29 15q1-9 8-13 0 9 8 16l4-6q9 16 4 28-9 12-13-6-3-12-11-19z" fill="#37d7fb" /><path d="M11 9l4 7q8-4 14-3-8 2-8 9-7 3-2 11 14 10 22-4 6 14-8 18T8 40Q3 24 11 9z" fill="#1173e0" /><circle cx="32" cy="30" r="10" fill="#2a35c4" /><path d="M12 24q8-6 15-2 1 5-6 6-4 8 6 12-14-1-15-16z" fill="#2bc3f8" /></I60>],
  ["Pense-bêtes", true, <I60><path d="M3 3h54v27L32 57H3z" fill="#ffd800" /><path d="M32 30h25L32 57z" fill="#3a3a3a" /><path d="M57 30v27H32z" fill="#eab000" /></I60>],
  ["Visual Studio Code", true, <I60><path d="m45 0 15 7v46l-15 7z" fill="#2aa4f0" /><path d="M45 0v17L7 45l-6-5v-3z" fill="#0b76bd" /><path d="M45 60V43L7 15l-6 5v3z" fill="#0a8ad6" /></I60>],
  ["Visual Studio", false, <I60><path d="m43 0 17 7v46l-17 7z" fill="#b383f0" /><path d="M43 0v17L7 45l-6-4V19l6-4v23z" fill="#8a45cf" /><path d="M43 60V43L7 15l-6 4v4z" fill="#7236b5" /></I60>],
  ["Terminal", false, <I60><rect y="8" width="60" height="44" rx="2" fill="#434343" /><path d="M0 8h60v7H0z" fill="#9b9b9b" /><path d="M0 8h20v7H0z" fill="#ccc" /><path d="m10 24 11 9-11 11" stroke="#e6e6e6" strokeWidth="5" /><path d="M28 40h20v6H28z" fill="#f2f2f2" /></I60>],
  ["Teams", true, <I60><circle cx="49" cy="15" r="6" fill="#5059c9" /><circle cx="31" cy="12" r="10" fill="#7b83eb" /><path d="M38 24h20v14q0 8-8 9H38z" fill="#5059c9" /><path d="M18 24h29v18q-3 13-16 13T18 42z" fill="#7b83eb" /><rect y="15" width="31" height="30" rx="3" fill="#4b53bc" /><path d="M8 22h15M15.500 22v17" stroke="#fff" strokeWidth="4" /><circle cx="49" cy="49" r="10" fill="#8cbd18" stroke="#e8f2cf" strokeWidth="2" /><path d="m43 49 4 4 8-8" stroke="#fff" strokeWidth="4" /></I60>],
  ["Courrier", true, <I60><path d="M0 19 30 1l30 18v38H0z" fill="#0a5fb0" /><path d="M0 19v38h60V19L30 40z" fill="#27a7ee" /><path d="M4 19h52L30 38z" fill="#f3f3f3" /></I60>],
  ["Bureau à distance", false, <I60><path d="m5 3 36 4-3 32-34-7z" fill="#1629a8" stroke="#d6d6d6" strokeWidth="3" /><ellipse cx="22" cy="44" rx="13" ry="7" fill="#bbb" /><circle cx="41" cy="45" r="14" fill="#eee" /><path d="m32 43 7 5-7 5m18-16-7 5 7 5" stroke="#31a52a" strokeWidth="4" /></I60>],
  ["Excel", true, <I60><path d="M13 3h44v54H13z" fill="#21a366" /><path d="M35 3h22v14H35z" fill="#33c481" /><path d="M13 30h44v27H13z" fill="#185c37" /><path d="M35 30h22v14H35z" fill="#107c41" /><rect y="15" width="30" height="30" rx="2" fill="#107c41" /><path d="m8 22 13 17M21 22 8 39" stroke="#fff" strokeWidth="4" /></I60>],
  ["Foxit PDF", true, <I60><path d="M0 0h47v13h13v47H0z" fill="#f68b1f" /><path d="m49 0 11 11H49z" fill="#f68b1f" /><path d="M44 10q-4 1-4 5 8 14-8 26h-6Q12 38 13 25 16 9 33 8q6-1 11 2z" fill="#fff" /><path d="M24 26q1-8 9-9-1 4 2 5-2 10-10 11z" fill="#f68b1f" /><text x="30" y="56" textAnchor="middle" fontFamily="Roboto" fontWeight="700" fontSize="14" fill="#fff">PDF</text></I60>],
  ["Moniteur", true, <I60><path d="m2 18 16-4v30L2 46z" fill="#b9b9b9" /><path d="m14 9 40 3-4 30-36-4z" fill="#e5f0f4" stroke="#bbb" strokeWidth="2" /><path d="m18 30 5-8 3 9 4-16 4 15 4-8 4 8 5-5" stroke="#63aac9" strokeWidth="2" /><ellipse cx="34" cy="47" rx="14" ry="7" fill="#d0d0d0" /></I60>],
  ["SQL Server", true, <I60><path d="M8 7h30v27q-15 8-30 0z" fill="#ffd400" /><ellipse cx="23" cy="7" rx="15" ry="5" fill="#e9a44a" /><path d="M44 3h13v13M3 44v12h13" stroke="#3f9c3d" strokeWidth="5" /><path d="m22 53 28-27M27 27l25 26" stroke="#1366b3" strokeWidth="6" /></I60>],
  ["Skype", true, <I60><circle cx="20" cy="20" r="18" fill="#0aa4e8" /><circle cx="40" cy="41" r="17" fill="#0a86dc" /><circle cx="30" cy="30" r="26" fill="#0a9ce8" /><text x="30" y="45" textAnchor="middle" fontFamily="Open Sans" fontWeight="700" fontSize="42" fill="#fff">S</text></I60>],
  ["Telegram", true, <I60><circle cx="30" cy="30" r="27" fill="#2ca0da" /><path d="m11 30 34-15-6 30-10-8-6 6-2-9z" fill="#fff" /><path d="m21 34 20-16-12 19-6 6z" fill="#b6d8ec" /></I60>],
  ["Word", true, <I60><path d="M14 3h44v54H14z" fill="#2b7cd3" /><path d="M14 3h44v14H14z" fill="#41a5ee" /><path d="M14 30h44v14H14z" fill="#185abd" /><path d="M14 43h44v14H14z" fill="#103f91" /><rect y="15" width="31" height="30" rx="2" fill="#185abd" /><path d="m5 22 4 16 6-13 6 13 4-16" stroke="#fff" strokeWidth="3.500" /></I60>],
];

function Taskbar() {
  return (
    <footer className="flex h-[97px] shrink-0 items-stretch bg-linear-to-r from-[#3a0c21] via-[#3f1229] to-[#48203a] text-white">
      <button aria-label="Démarrer" className="flex w-[120px] items-center justify-center pt-[3px]">
        <Svg><path d="M0 5.500 16 3v16H0zM18 2.600 40 0v19H18zM0 21h16v16L0 34.500zM18 21h22v19l-22-2.600z" fill="#fff" /></Svg>
      </button>
      <label className="flex w-[860px] items-center border-x-2 border-t-3 border-[#8b566b] bg-[#70344b] pl-[30px]">
        <Svg box="0 0 50 50" className="size-[50px]"><circle cx="32" cy="18" r="15" stroke="#fff" strokeWidth="3" /><path d="M21 29 2 48" stroke="#fff" strokeWidth="3" /></Svg>
        <input type="search" aria-label="Type here to search" placeholder="Type here to search" className="mt-[3px] ml-[30px] min-w-0 flex-1 bg-transparent text-[36px] outline-none placeholder:text-[#e0d0d6]" />
      </label>
      <button aria-label="Cortana" className="flex w-[120px] items-center justify-center pt-[3px]">
        <Svg><circle cx="20" cy="20" r="17" stroke="#fff" strokeWidth="4.500" /></Svg>
      </button>
      <button aria-label="Affichage des tâches" className="flex w-[120px] items-center justify-center pt-[3px]">
        <Svg><path d="M1 0v7h26V0M1 12h26v16H1zM1 40v-7h26v7M38 0v10M38 21v19" stroke="#fff" strokeWidth="2.500" /><circle cx="38" cy="15" r="3.500" fill="#fff" /></Svg>
      </button>
      <button aria-label="Chrome" className="mr-[2px] ml-[8px] flex w-[92px] items-center border-b-[2px] border-[#fca8cc] bg-[#7f063b] pt-[5px] pl-[12px] shadow-[inset_-11px_0_0_#66042f]">
        <Svg box="0 0 56 56" className="size-[56px]">
          <circle cx="28" cy="28" r="28" fill="#16a05d" />
          <path d="M28 0q17 0 24.500 15H28L14 35 3.500 14.500Q12 0 28 0z" fill="#dc4a3e" />
          <path d="M52.500 15Q58 27 53 40 45 55 26 56l14-23-2-18z" fill="#ffcd40" />
          <circle cx="28" cy="28" r="13" fill="#fff" /><circle cx="28" cy="28" r="10" fill="#4a89f4" />
        </Svg>
      </button>
      <div className="flex w-[1519px] min-w-0">
        {TASKS.map(([name, open, icon]) => (
          <button key={name} aria-label={name} className="relative flex min-w-0 flex-1 items-center justify-center pt-[3px]">
            {icon}
            {name === "Courrier" && <span className="absolute right-0 bottom-[7px] flex size-[42px] items-center justify-center rounded-full border-2 border-[#b98ca0] bg-[#6e0836] text-[30px] leading-none">1</span>}
            {name === "Telegram" && <span className="absolute right-[9px] bottom-[12px] w-[38px] rounded-lg bg-[#ef3b3b] text-center text-[22px] leading-[27px]">..99</span>}
            {open && <span className="absolute bottom-0 h-[2px] w-[72px] bg-[#fca8cc]" />}
          </button>
        ))}
      </div>
      <div className="ml-[3px] flex w-[44px] flex-col items-center justify-between bg-[#f0f0f0] py-[10px]">
        <button aria-label="Monter"><Svg className="size-[20px]" box="0 0 20 20"><path d="m2 14 8-8 8 8" stroke="#555" strokeWidth="5" /></Svg></button>
        <button aria-label="Descendre"><Svg className="size-[20px]" box="0 0 20 20"><path d="m2 6 8 8 8-8" stroke="#555" strokeWidth="5" /></Svg></button>
      </div>
      <div className="ml-auto flex items-center">
        <Svg box="0 0 50 50" className="size-[50px]"><circle cx="25" cy="25" r="24" fill="#fdb833" /><path d="M3 17Q10 1 27 1 10 15 3 17z" fill="#ffd978" /><path d="M24 40q-7-2-5-9 3-5 7-4 2-11 12-11 9 2 9 12 5 3 3 8-2 5-9 5z" fill="#bfe3f7" /></Svg>
        <span className="ml-[23px] w-[126px] pt-[3px] text-[33px]">28°C</span>
        <button aria-label="Icônes cachées" className="mr-[46px]"><Svg className="size-[34px]" box="0 0 34 34"><path d="M2 25 17 9l15 16" stroke="#fff" strokeWidth="3" /></Svg></button>
        <button aria-label="Volume" className="mr-[44px]"><Svg><path d="M1 14h6l8-8v28l-8-8H1zM20 14q5 6 0 12M26 9q8 11 0 22M32 4q12 16 0 32" stroke="#fff" strokeWidth="2.500" /></Svg></button>
        <button aria-label="Réseau" className="mr-[42px]"><Svg className="size-[34px]"><path d="M3 39Q3 3 38 3M12 39q0-26 26-26M21 39q0-17 17-17" stroke="#fff" strokeWidth="3" /><circle cx="34" cy="35" r="4" fill="#fff" /></Svg></button>
        <button aria-label="Batterie" className="mr-[40px]"><Svg><path d="M12 8h24v24H12v-4M36 15h4v9h-4M1 6h10v6q0 4-5 4t-5-4zM3 6V0m6 6V0M6 16v12h6" stroke="#fff" strokeWidth="2.500" /><path d="M16 13h15v14H16z" fill="#fff" /></Svg></button>
        <button className="w-[70px] pt-[2px] text-left text-[28px]">FRA</button>
        <button className="flex w-[168px] flex-col items-center pt-[3px] text-[28px] leading-[48px] whitespace-nowrap">
          <span>7:06 PM</span>
          <span>7/2/2021</span>
        </button>
        <button aria-label="Notifications" className="relative ml-[31px] flex w-[92px] self-stretch border-r-2 border-[#8a6a7c] pt-[29px]">
          <Svg><path d="M0 1h40v33H22l-5 6v-6H0z" fill="#fff" /><path d="M7 10h26M7 18h26M7 26h16" stroke="#48203a" strokeWidth="3" /></Svg>
          <span className="absolute top-[47px] left-[18px] flex size-[42px] items-center justify-center rounded-full border-2 border-[#b98ca0] bg-[#760a3a] text-[28px] leading-none font-semibold">5</span>
        </button>
        <span className="w-1" />
      </div>
    </footer>
  );
}

export default function App() {
  return (
    <div className="flex min-h-screen flex-col font-['Open_Sans','Noto_Sans',sans-serif]">
      <header>
        <TabStrip />
        <Toolbar />
        <Bookmarks />
      </header>
      <LoginPage />
      <Taskbar />
    </div>
  );
}
